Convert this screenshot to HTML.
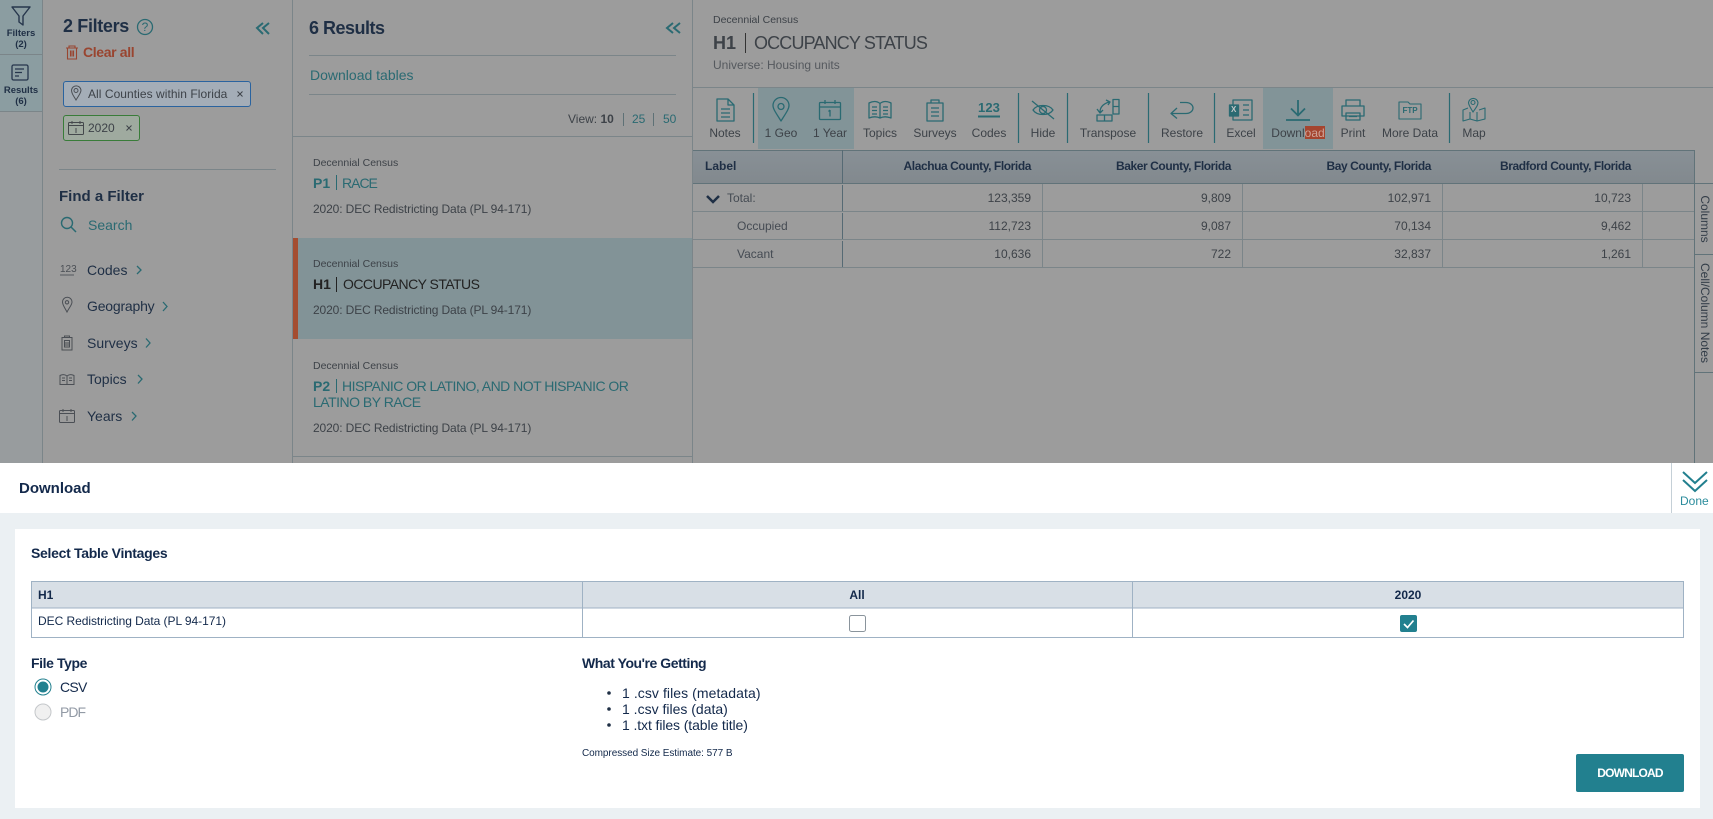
<!DOCTYPE html>
<html lang="en"><head><meta charset="utf-8"><title>Occupancy Status Download</title>
<style>
html,body{margin:0;padding:0;width:1713px;height:819px;overflow:hidden;background:#ebf0f3}
body{font-family:"Liberation Sans",sans-serif;position:relative;color:#3d4248}
.b{position:absolute}
.t{position:absolute;white-space:nowrap;line-height:16px;font-size:12px}
.c{text-align:center;width:100px}
.r{text-align:right;width:150px}
.n{color:#1f2f45}.g{color:#2a6a72}.B{font-weight:bold}
svg{position:absolute;left:0;top:0}
</style></head><body>
<div class="b" style="left:0;top:0;width:1713px;height:463px;background:#9c9c9c"></div>
<div class="b" style="left:0;top:0;width:42px;height:463px;background:#989c9e"></div>
<div class="b" style="left:0;top:0;width:42px;height:54px;background:#8b9da1"></div>
<div class="b" style="left:0;top:55px;width:42px;height:56px;background:#8b9da1"></div>
<div class="b" style="left:293px;top:238px;width:399px;height:101px;background:#829397"></div>
<div class="b" style="left:293px;top:238px;width:5px;height:101px;background:#a44d31"></div>
<div class="b" style="left:758px;top:88px;width:96px;height:61px;background:#829498"></div>
<div class="b" style="left:1263px;top:88px;width:70px;height:61px;background:#829498"></div>
<div class="b" style="left:693px;top:150px;width:1001px;height:33px;background:linear-gradient(#889096,#82898e)"></div>
<div class="b" style="left:63px;top:81px;width:186px;height:24px;border:1.5px solid #2a639f;border-radius:3px;background:#a4adb7"></div>
<div class="b" style="left:63px;top:115px;width:75px;height:24px;border:1.5px solid #397c39;border-radius:3px;background:#9faa9f"></div>
<div class="b" style="left:0;top:463px;width:1713px;height:50px;background:#fff"></div>
<div class="b" style="left:15px;top:529px;width:1685px;height:279px;background:#fff"></div>
<div class="b" style="left:31px;top:581px;width:1653px;height:27px;background:#d8dfe6"></div>
<div class="b" style="left:1576px;top:754px;width:108px;height:38px;background:#22808f;border-radius:2px"></div>
<div class="b" style="left:1305px;top:126px;width:20px;height:13px;background:#a5452f"></div>

<svg width="1713" height="819" viewBox="0 0 1713 819" fill="none">
<g stroke="#7b8589" stroke-width="1">
<path d="M42.5 0V463M292.5 0V463M692.5 0V463"/>
<path d="M0 54.5H42M0 111.5H42"/>
<path d="M59 169.5H276M309 55.5H676M309 94.5H676M293 136.5H692M293 456.5H692M693 87.5H1713"/>
<path d="M693 211.5H1694M693 239.5H1694M693 267.5H1694"/>
<path d="M1042.5 184V211M1242.5 184V211M1442.5 184V211M1642.5 184V211M1042.5 212V239M1242.5 212V239M1442.5 212V239M1642.5 212V239M1042.5 240V267M1242.5 240V267M1442.5 240V267M1642.5 240V267"/>
</g>
<path d="M623.5 113V126M653.5 113V126" stroke="#5e7176"/>
<path d="M336.5 175V190M336.5 379V393" stroke="#2a6a72"/>
<path d="M336.5 277V292" stroke="#222"/>
<path d="M745.5 33V53" stroke="#333"/>
<path d="M693 150.5H1694M693 183.5H1713M1694.5 150V463M1695 254.5H1713M1695 372.5H1713" stroke="#617379"/>
<path d="M842.5 150V183M842.5 185V211M842.5 213V239M842.5 241V267" stroke="#566a74"/>
<path d="M753.5 93V143M1018.5 93V143M1067.5 93V143M1148.5 93V143M1214.5 93V143M1449.5 93V143" stroke="#2a6a72" stroke-width="1.2"/>

<!-- rail icons -->
<path d="M12 7H30L23 16V25L19 22V16Z" stroke="#26364c" stroke-width="1.4" stroke-linejoin="round"/>
<rect x="12" y="65" width="16" height="15" rx="1.5" stroke="#26364c" stroke-width="1.3"/>
<path d="M15 69H24M15 72.5H22M15 76H19" stroke="#26364c" stroke-width="1.2"/>
<!-- filters -->
<circle cx="145" cy="27" r="7.5" stroke="#2a6a72" stroke-width="1.3"/>
<path d="M263 23L257 28L263 34M269 23L263 28L269 34" stroke="#2a6a72" stroke-width="2"/>
<path d="M66 48H78M69 48V46H75V48M67.500 48V59H76.500V48M70.500 50.500V56.500M72 50.500V56.500M73.500 50.500V56.500" stroke="#994530" stroke-width="1.100"/>
<path d="M76 100C73 95 71.500 93 71.500 90A4.800 4.800 0 0 1 81 90C81 93 79 95 76 100Z M76 92.500A2 2 0 1 0 76 88.500A2 2 0 1 0 76 92.500Z" stroke="#4b4f55" stroke-width="1"/>
<path d="M237.500 91.500L242.500 96.500M242.500 91.500L237.500 96.500M126.500 125.500L131.500 130.500M131.500 125.500L126.500 130.500" stroke="#3d4248" stroke-width="1"/>
<rect x="68.500" y="122.500" width="15" height="12" rx="1" stroke="#44484c"/>
<path d="M68.500 125.500H83.500M72 121V124M80 121V124M76 128V133" stroke="#44484c"/>
<circle cx="67" cy="223" r="5.500" stroke="#2a6a72" stroke-width="1.400"/><path d="M71 227L76 232" stroke="#2a6a72" stroke-width="1.500"/>
<path d="M60 275H74" stroke="#55595e"/>
<path d="M67 312C64.500 307 62.500 305 62.500 302A4.700 4.700 0 0 1 72 302C72 305 69.500 307 67 312Z M67 304A1.700 1.700 0 1 0 67 300.600A1.700 1.700 0 1 0 67 304Z" stroke="#4b4f55"/>
<path d="M62 337.500H72V350H62ZM64.500 337.500V336H69.500V337.500M64.500 340.500H69.500V347H64.500ZM64.500 343H69.500M64.500 345H69.500" stroke="#4b4f55"/>
<path d="M60 375.500C63 374 65 374.500 67 376C69 374.500 71 374 74 375.500V384.500H60ZM67 376V384.500M62 378H65M62 380.500H65M69 378H72M69 380.500H72" stroke="#4b4f55"/>
<rect x="59.500" y="410.500" width="15" height="12" rx="1" stroke="#4b4f55"/><path d="M59.500 413.500H74.500M63 409V412M71 409V412M67 416V421" stroke="#4b4f55"/>
<g stroke="#2a6a72" stroke-width="1.300">
<path d="M137 266L141 270L137 274M163 302L167 306.500L163 311M146 338.500L150 343L146 347.500M138 375L142 379L138 383.500M132 412L136 416L132 420.500"/>
</g>
<path d="M673 23L667 28L673 33M680 23L674 28L680 33" stroke="#2a6a72" stroke-width="2"/>

<!-- toolbar -->
<g stroke="#2a6a72" stroke-width="1.300" stroke-linejoin="round">
<path d="M717 99H728L734 105V121H717ZM728 99V105H734M721 109H730M721 113H730M721 117H730"/>
<path d="M781 121C776 113 773 109 773 105.500A8 8 0 0 1 789 105.500C789 109 786 113 781 121ZM781 109.500A3 3 0 1 0 781 103.500A3 3 0 1 0 781 109.500Z"/>
<rect x="819.500" y="102.500" width="21" height="17" rx="1"/><path d="M819.500 107H840.500M825 100V104M835 100V104M830 110V116.500M828.500 111.500L830 110"/>
<path d="M869 103C873 101 877 101 880 103.500C883 101 887 101 891 103V118C887 116.500 883 116.500 880 118C877 116.500 873 116.500 869 118ZM880 103.500V118M872 107H877M872 110.500H877M872 114H877M883 107H888M883 110.500H888M883 114H888"/>
<path d="M927 103H943V121H927ZM931 103V100H939V103M931 108H939M931 112H939M931 116H939"/>
<path d="M978 116.500H1000" stroke-width="2"/>
<path d="M1033 110C1037 104 1049 104 1053 110C1049 116 1037 116 1033 110ZM1043 113.500A3.500 3.500 0 1 0 1043 106.500A3.500 3.500 0 1 0 1043 113.500ZM1032 101L1054 119"/>
<path d="M1113 99.500H1119V114H1113ZM1113 106.500H1119M1097 115H1112V121H1097ZM1104.500 115V121M1100 112C1100 107 1103 104 1109 102M1106 100L1110 102L1108 105M1097 109L1100 113L1103 110"/>
<path d="M1180 102.500H1186C1190 102.500 1193 105 1193 108C1193 111 1190 113.500 1186 113.500H1171M1177 108L1171 113.500L1177 118.500"/>
<path d="M1233 100H1252V120H1233ZM1243 105H1249M1243 110H1249M1243 115H1249"/>
<rect x="1229.500" y="105" width="9" height="11" fill="#2a6a72"/>
<path d="M1298 100V115M1291 108.500L1298 115.500L1305 108.500M1286 120H1310" stroke-width="1.800"/>
<path d="M1346 106V100H1360V106M1342 106H1364V116H1342ZM1346 113H1360V120H1346ZM1349 116.500H1357"/>
<path d="M1399 102H1408L1410 104H1421V119H1399Z" stroke-width="1.100"/>
<path d="M1473 112C1470 107 1468.500 105 1468.500 102.500A4.800 4.800 0 0 1 1478 102.500C1478 105 1476.500 107 1473 112ZM1473 104.500A2 2 0 1 0 1473 100.500A2 2 0 1 0 1473 104.500ZM1468 108L1463 110V121L1470 119L1477 121L1485 119V108L1479 110M1470 112V119M1477 112V121" stroke-width="1.100"/>
</g>
<path d="M707 196L713 202L719 196" stroke="#1f2f45" stroke-width="2.500"/>
<!-- bottom -->
<path d="M1671.500 463V513" stroke="#c5d0d7"/>
<path d="M1683 472L1695 483L1707 472M1683 480L1695 491L1707 480" stroke="#22808f" stroke-width="2"/>
<path d="M31.500 581.500H1683.500V637.500H31.500ZM31 608H1684M582.500 581V638M1132.500 581V638" stroke="#9fb2c4"/>
<rect x="849.500" y="615.500" width="16" height="16" rx="2" stroke="#8a949c"/>
<rect x="1400" y="615" width="17" height="17" rx="2" fill="#22808f"/>
<path d="M1404 624L1407.500 627.500L1413.500 620.500" stroke="#fff" stroke-width="1.700"/>
<circle cx="43" cy="687" r="8" stroke="#22808f" fill="#fff"/><circle cx="43" cy="687" r="5.500" fill="#22808f"/>
<circle cx="43" cy="712" r="8" stroke="#c4c7ca" fill="#f0f0f0"/>
<circle cx="609" cy="693" r="1.800" fill="#1f2f45"/><circle cx="609" cy="709" r="1.800" fill="#1f2f45"/><circle cx="609" cy="725" r="1.800" fill="#1f2f45"/>
</svg>

<!-- rail -->
<div class="t c n B" style="left:-29px;top:28px;font-size:9.500px;line-height:11px">Filters<br>(2)</div>
<div class="t c n B" style="left:-29px;top:85px;font-size:9.500px;line-height:11px">Results<br>(6)</div>
<!-- filter -->
<div class="t n B" style="left:63px;top:18px;font-size:18px;letter-spacing:-.35px">2 Filters</div>
<div class="t g" style="left:139px;top:19px;font-size:12px;width:12px;text-align:center">?</div>
<div class="t B" style="left:83px;top:44px;font-size:14px;color:#994530;letter-spacing:-.35px">Clear all</div>
<div class="t" style="left:88px;top:86px;letter-spacing:.05px">All Counties within Florida</div>
<div class="t" style="left:88px;top:120px">2020</div>
<div class="t n B" style="left:59px;top:187px;font-size:15px;margin-top:2px">Find a Filter</div>
<div class="t g" style="left:88px;top:217px;font-size:14px">Search</div>
<div class="t" style="left:60px;top:262px;font-size:10px;color:#4b4f55">123</div>
<div class="t n" style="left:87px;top:262px;font-size:14px">Codes</div>
<div class="t n" style="left:87px;top:298px;font-size:14px;letter-spacing:-.2px">Geography</div>
<div class="t n" style="left:87px;top:335px;font-size:14px">Surveys</div>
<div class="t n" style="left:87px;top:371px;font-size:14px">Topics</div>
<div class="t n" style="left:87px;top:408px;font-size:14px">Years</div>
<!-- results -->
<div class="t n B" style="left:309px;top:20px;font-size:18px;letter-spacing:-.5px">6 Results</div>
<div class="t g" style="left:310px;top:67px;font-size:14px">Download tables</div>
<div class="t" style="left:568px;top:111px">View: <b>10</b></div>
<div class="t g" style="left:632px;top:111px">25</div>
<div class="t g" style="left:663px;top:111px">50</div>
<div class="t" style="left:313px;top:155px;font-size:10.500px">Decennial Census</div>
<div class="t g B" style="left:313px;top:175px;font-size:14px">P1</div>
<div class="t g" style="left:342px;top:175px;font-size:14px;letter-spacing:-1px">RACE</div>
<div class="t" style="left:313px;top:201px;letter-spacing:-.12px">2020: DEC Redistricting Data (PL 94-171)</div>
<div class="t" style="left:313px;top:256px;font-size:10.500px">Decennial Census</div>
<div class="t B" style="left:313px;top:276px;font-size:14px;color:#222">H1</div>
<div class="t" style="left:343px;top:276px;font-size:14px;color:#222;letter-spacing:-.55px">OCCUPANCY STATUS</div>
<div class="t" style="left:313px;top:302px;letter-spacing:-.12px">2020: DEC Redistricting Data (PL 94-171)</div>
<div class="t" style="left:313px;top:358px;font-size:10.500px">Decennial Census</div>
<div class="t g B" style="left:313px;top:378px;font-size:14px">P2</div>
<div class="t g" style="left:342px;top:378px;font-size:14px;letter-spacing:-.53px">HISPANIC OR LATINO, AND NOT HISPANIC OR</div>
<div class="t g" style="left:313px;top:394px;font-size:14px;letter-spacing:-.5px">LATINO BY RACE</div>
<div class="t" style="left:313px;top:420px;letter-spacing:-.12px">2020: DEC Redistricting Data (PL 94-171)</div>
<!-- header -->
<div class="t" style="left:713px;top:12px;font-size:10.500px">Decennial Census</div>
<div class="t B" style="left:713px;top:35px;font-size:18px;color:#3d4248">H1</div>
<div class="t" style="left:754px;top:35px;font-size:18px;letter-spacing:-.85px">OCCUPANCY STATUS</div>
<div class="t" style="left:713px;top:57px;color:#55595e">Universe: Housing units</div>
<!-- toolbar labels -->
<div class="t c" style="left:675px;top:125px">Notes</div>
<div class="t c" style="left:731px;top:125px">1 Geo</div>
<div class="t c" style="left:780px;top:125px">1 Year</div>
<div class="t c" style="left:830px;top:125px">Topics</div>
<div class="t c" style="left:885px;top:125px">Surveys</div>
<div class="t c" style="left:939px;top:125px">Codes</div>
<div class="t c" style="left:993px;top:125px">Hide</div>
<div class="t c" style="left:1058px;top:125px">Transpose</div>
<div class="t c" style="left:1132px;top:125px">Restore</div>
<div class="t c" style="left:1191px;top:125px">Excel</div>
<div class="t c" style="left:1248px;top:125px">Downl<span style="color:#cfa498">oad</span></div>
<div class="t c" style="left:1303px;top:125px">Print</div>
<div class="t c" style="left:1360px;top:125px">More Data</div>
<div class="t c" style="left:1424px;top:125px">Map</div>
<div class="t g B" style="left:978px;top:100px;font-size:13px;width:22px;text-align:center;letter-spacing:.1px">123</div>
<div class="t" style="left:1231px;top:102px;font-size:8px;font-weight:bold;color:#c4c8c9">X</div>
<div class="t g B" style="left:1400px;top:103px;font-size:8px;width:20px;text-align:center">FTP</div>
<!-- table -->
<div class="t n B" style="left:705px;top:158px">Label</div>
<div class="t r n B" style="left:881px;top:158px;letter-spacing:-.42px">Alachua County, Florida</div>
<div class="t r n B" style="left:1081px;top:158px;letter-spacing:-.42px">Baker County, Florida</div>
<div class="t r n B" style="left:1281px;top:158px;letter-spacing:-.42px">Bay County, Florida</div>
<div class="t r n B" style="left:1481px;top:158px;letter-spacing:-.42px">Bradford County, Florida</div>
<div class="t" style="left:727px;top:190px;color:#454b53">Total:</div>
<div class="t" style="left:737px;top:218px;color:#454b53">Occupied</div>
<div class="t" style="left:737px;top:246px;color:#454b53">Vacant</div>
<div class="t r" style="left:881px;top:190px">123,359</div><div class="t r" style="left:1081px;top:190px">9,809</div><div class="t r" style="left:1281px;top:190px">102,971</div><div class="t r" style="left:1481px;top:190px">10,723</div>
<div class="t r" style="left:881px;top:218px">112,723</div><div class="t r" style="left:1081px;top:218px">9,087</div><div class="t r" style="left:1281px;top:218px">70,134</div><div class="t r" style="left:1481px;top:218px">9,462</div>
<div class="t r" style="left:881px;top:246px">10,636</div><div class="t r" style="left:1081px;top:246px">722</div><div class="t r" style="left:1281px;top:246px">32,837</div><div class="t r" style="left:1481px;top:246px">1,261</div>
<div class="t" style="left:1655px;top:211px;width:100px;text-align:center;transform:rotate(90deg);color:#333d48">Columns</div>
<div class="t" style="left:1655px;top:305px;width:100px;text-align:center;transform:rotate(90deg);color:#333d48">Cell/Column Notes</div>
<!-- download panel -->
<div class="t B" style="left:19px;top:481px;font-size:15px;color:#13294b">Download</div>
<div class="t" style="left:1680px;top:493px;font-size:12px;color:#2b8c9c">Done</div>
<div class="t B" style="left:31px;top:545px;font-size:14px;color:#13294b;letter-spacing:-.3px">Select Table Vintages</div>
<div class="t B" style="left:38px;top:587px;color:#13294b">H1</div>
<div class="t" style="left:38px;top:613px;color:#13294b;letter-spacing:-.05px">DEC Redistricting Data (PL 94-171)</div>
<div class="t c B" style="left:807px;top:587px;color:#13294b">All</div>
<div class="t c B" style="left:1358px;top:587px;color:#13294b">2020</div>
<div class="t B" style="left:31px;top:655px;font-size:14px;color:#13294b;letter-spacing:-.4px">File Type</div>
<div class="t" style="left:60px;top:679px;font-size:14px;color:#13294b;letter-spacing:-.7px">CSV</div>
<div class="t" style="left:60px;top:704px;font-size:14px;color:#929aa5;letter-spacing:-1px">PDF</div>
<div class="t B" style="left:582px;top:655px;font-size:14px;color:#13294b;letter-spacing:-.45px">What You're Getting</div>
<div class="t" style="left:622px;top:685px;font-size:14px;color:#13294b;letter-spacing:.07px">1 .csv files (metadata)</div>
<div class="t" style="left:622px;top:701px;font-size:14px;color:#13294b">1 .csv files (data)</div>
<div class="t" style="left:622px;top:717px;font-size:14px;color:#13294b;letter-spacing:-.1px">1 .txt files (table title)</div>
<div class="t" style="left:582px;top:746px;font-size:10px;color:#13294b;letter-spacing:-.06px">Compressed Size Estimate: 577 B</div>
<div class="t c B" style="left:1580px;top:765px;color:#fff;letter-spacing:-.8px">DOWNLOAD</div>
</body></html>
